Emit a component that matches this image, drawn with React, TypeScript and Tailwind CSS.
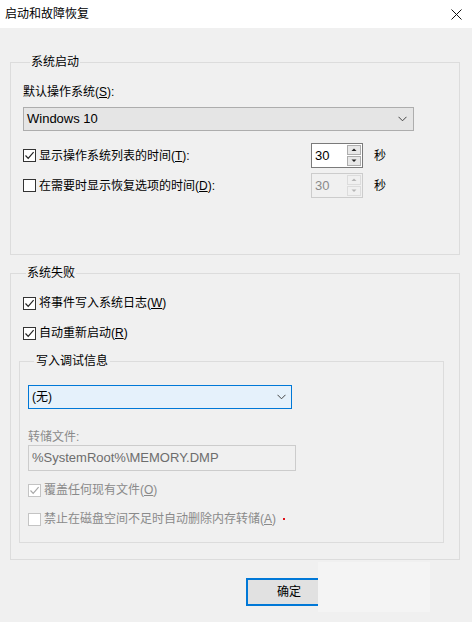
import React from 'react';

const FONT = { fontFamily: '"Liberation Sans", "Noto Sans CJK SC", sans-serif' };

const Check: React.FC<{ checked?: boolean; disabled?: boolean }> = ({ checked, disabled }) => (
  <span
    className={`w-[13px] h-[13px] shrink-0 border bg-white flex items-center justify-center ${
      disabled ? 'border-[#c4c4c4]' : 'border-[#333333]'
    }`}
  >
    {checked && (
      <svg width="11" height="11" viewBox="0 0 11 11">
        <path
          d="M1.5 5.5 L4.2 8.3 L9.6 2.2"
          fill="none"
          stroke={disabled ? '#a8a8a8' : '#222222'}
          strokeWidth="1.2"
        />
      </svg>
    )}
  </span>
);

const Chevron: React.FC = () => (
  <svg width="9" height="6" viewBox="0 0 9 6">
    <path d="M0.5 0.8 L4.5 4.8 L8.5 0.8" fill="none" stroke="#444444" strokeWidth="1" />
  </svg>
);

const Spin: React.FC<{ disabled?: boolean }> = ({ disabled }) => (
  <div
    className={`w-[52px] h-[25px] flex border ${
      disabled ? 'border-[#cccccc] bg-[#f0f0f0]' : 'border-[#7a7a7a] bg-white'
    }`}
  >
    <div
      className={`flex-1 pl-[3px] text-[13px] leading-[23px] ${disabled ? 'text-[#8a8a8a]' : 'text-black'}`}
    >
      30
    </div>
    <div className="w-[16px] flex flex-col gap-[1px] p-[1px]">
      {['M1.5 4 L4 1.5 L6.5 4 Z', 'M1.5 1.5 L4 4 L6.5 1.5 Z'].map((d) => (
        <div
          key={d}
          className={`flex-1 flex items-center justify-center border ${
            disabled ? 'border-[#dcdcdc] bg-[#f0f0f0]' : 'border-[#adadad] bg-[#e8e8e8]'
          }`}
        >
          <svg width="8" height="6" viewBox="0 0 8 6">
            <path d={d} fill={disabled ? '#b5b5b5' : '#222222'} />
          </svg>
        </div>
      ))}
    </div>
  </div>
);

const App: React.FC = () => {
  return (
    <div className="w-[472px] h-[622px] flex flex-col overflow-hidden text-[12px] text-black" style={FONT}>
      {/* Title bar */}
      <div className="h-[28px] bg-white flex items-center justify-between pl-[5px] pr-[10px]">
        <span className="leading-[16px]">启动和故障恢复</span>
        <svg width="11" height="11" viewBox="0 0 11 11">
          <path d="M0.5 0.5 L10.5 10.5 M10.5 0.5 L0.5 10.5" stroke="#111111" strokeWidth="1" />
        </svg>
      </div>

      <div className="flex-1 bg-[#f0f0f0] pt-[26px] px-[10px] pr-[12px] flex flex-col">
        {/* 系统启动 */}
        <fieldset className="border border-[#dcdcdc] px-[12px] pb-[56px]">
          <legend className="ml-[7px] px-[1px] leading-[16px]">系统启动</legend>
          <div className="mt-[14px] leading-[16px]">
            默认操作系统(<span className="underline">S</span>):
          </div>
          <div className="mt-[7px] w-[391px] h-[24px] bg-[#e5e5e5] border border-[#adadad] flex items-center justify-between pl-[3px] pr-[6px]">
            <span className="text-[13px]">Windows 10</span>
            <Chevron />
          </div>
          <div className="mt-[12px] flex items-center h-[25px]">
            <div className="w-[288px] flex items-center gap-[3px]">
              <Check checked />
              <span className="leading-[16px]">
                显示操作系统列表的时间(<span className="underline">T</span>):
              </span>
            </div>
            <Spin />
            <span className="ml-[11px] leading-[16px]">秒</span>
          </div>
          <div className="mt-[5px] flex items-center h-[25px]">
            <div className="w-[288px] flex items-center gap-[3px]">
              <Check />
              <span className="leading-[16px]">
                在需要时显示恢复选项的时间(<span className="underline">D</span>):
              </span>
            </div>
            <Spin disabled />
            <span className="ml-[11px] leading-[16px]">秒</span>
          </div>
        </fieldset>

        {/* 系统失败 */}
        <fieldset className="mt-[10px] border border-[#dcdcdc] pl-[8px] pr-[15px] pb-[16px]">
          <legend className="ml-[7px] px-[1px] leading-[16px]">系统失败</legend>
          <div className="mt-[14px] pl-[4px] flex items-center gap-[3px] h-[16px]">
            <Check checked />
            <span className="leading-[16px]">
              将事件写入系统日志(<span className="underline">W</span>)
            </span>
          </div>
          <div className="mt-[14px] pl-[4px] flex items-center gap-[3px] h-[16px]">
            <Check checked />
            <span className="leading-[16px]">
              自动重新启动(<span className="underline">R</span>)
            </span>
          </div>

          {/* 写入调试信息 */}
          <fieldset className="mt-[12px] border border-[#dcdcdc] px-[8px] pb-[15px]">
            <legend className="ml-[6px] px-[2px] leading-[16px]">写入调试信息</legend>
            <div className="mt-[16px] w-[264px] h-[24px] bg-[#e5f1fb] border border-[#0078d7] flex items-center justify-between pl-[3px] pr-[5px]">
              <span className="leading-[16px]">(无)</span>
              <Chevron />
            </div>
            <div className="mt-[20px] leading-[16px] text-[#8a8a8a]">转储文件:</div>
            <div className="w-[268px] h-[26px] border border-[#cccccc] bg-[#f0f0f0] pl-[3px] text-[13px] leading-[24px] text-[#6d6d6d]">
              %SystemRoot%\MEMORY.DMP
            </div>
            <div className="mt-[11px] flex items-center gap-[3px] h-[16px]">
              <Check checked disabled />
              <span className="leading-[16px] text-[#8a8a8a]">
                覆盖任何现有文件(<span className="underline">O</span>)
              </span>
            </div>
            <div className="mt-[13px] flex items-center gap-[3px] h-[16px]">
              <Check disabled />
              <span className="leading-[16px] text-[#8a8a8a]">
                禁止在磁盘空间不足时自动删除内存转储(<span className="underline">A</span>)
              </span>
              <span className="ml-[4px] w-[2px] h-[2px] bg-[#e0101a]" />
            </div>
          </fieldset>
        </fieldset>

        {/* Buttons */}
        <div className="mt-[18px] flex items-start">
          <div className="ml-[236px] w-[72px] h-[28px] border-2 border-r-0 border-[#0078d7] bg-[#e1e1e1] pl-[29px] leading-[24px]">
            确定
          </div>
          <div className="w-[112px] h-[50px] -mt-[16px] bg-[#f4f4f4]" />
        </div>
      </div>
    </div>
  );
};

export default App;
